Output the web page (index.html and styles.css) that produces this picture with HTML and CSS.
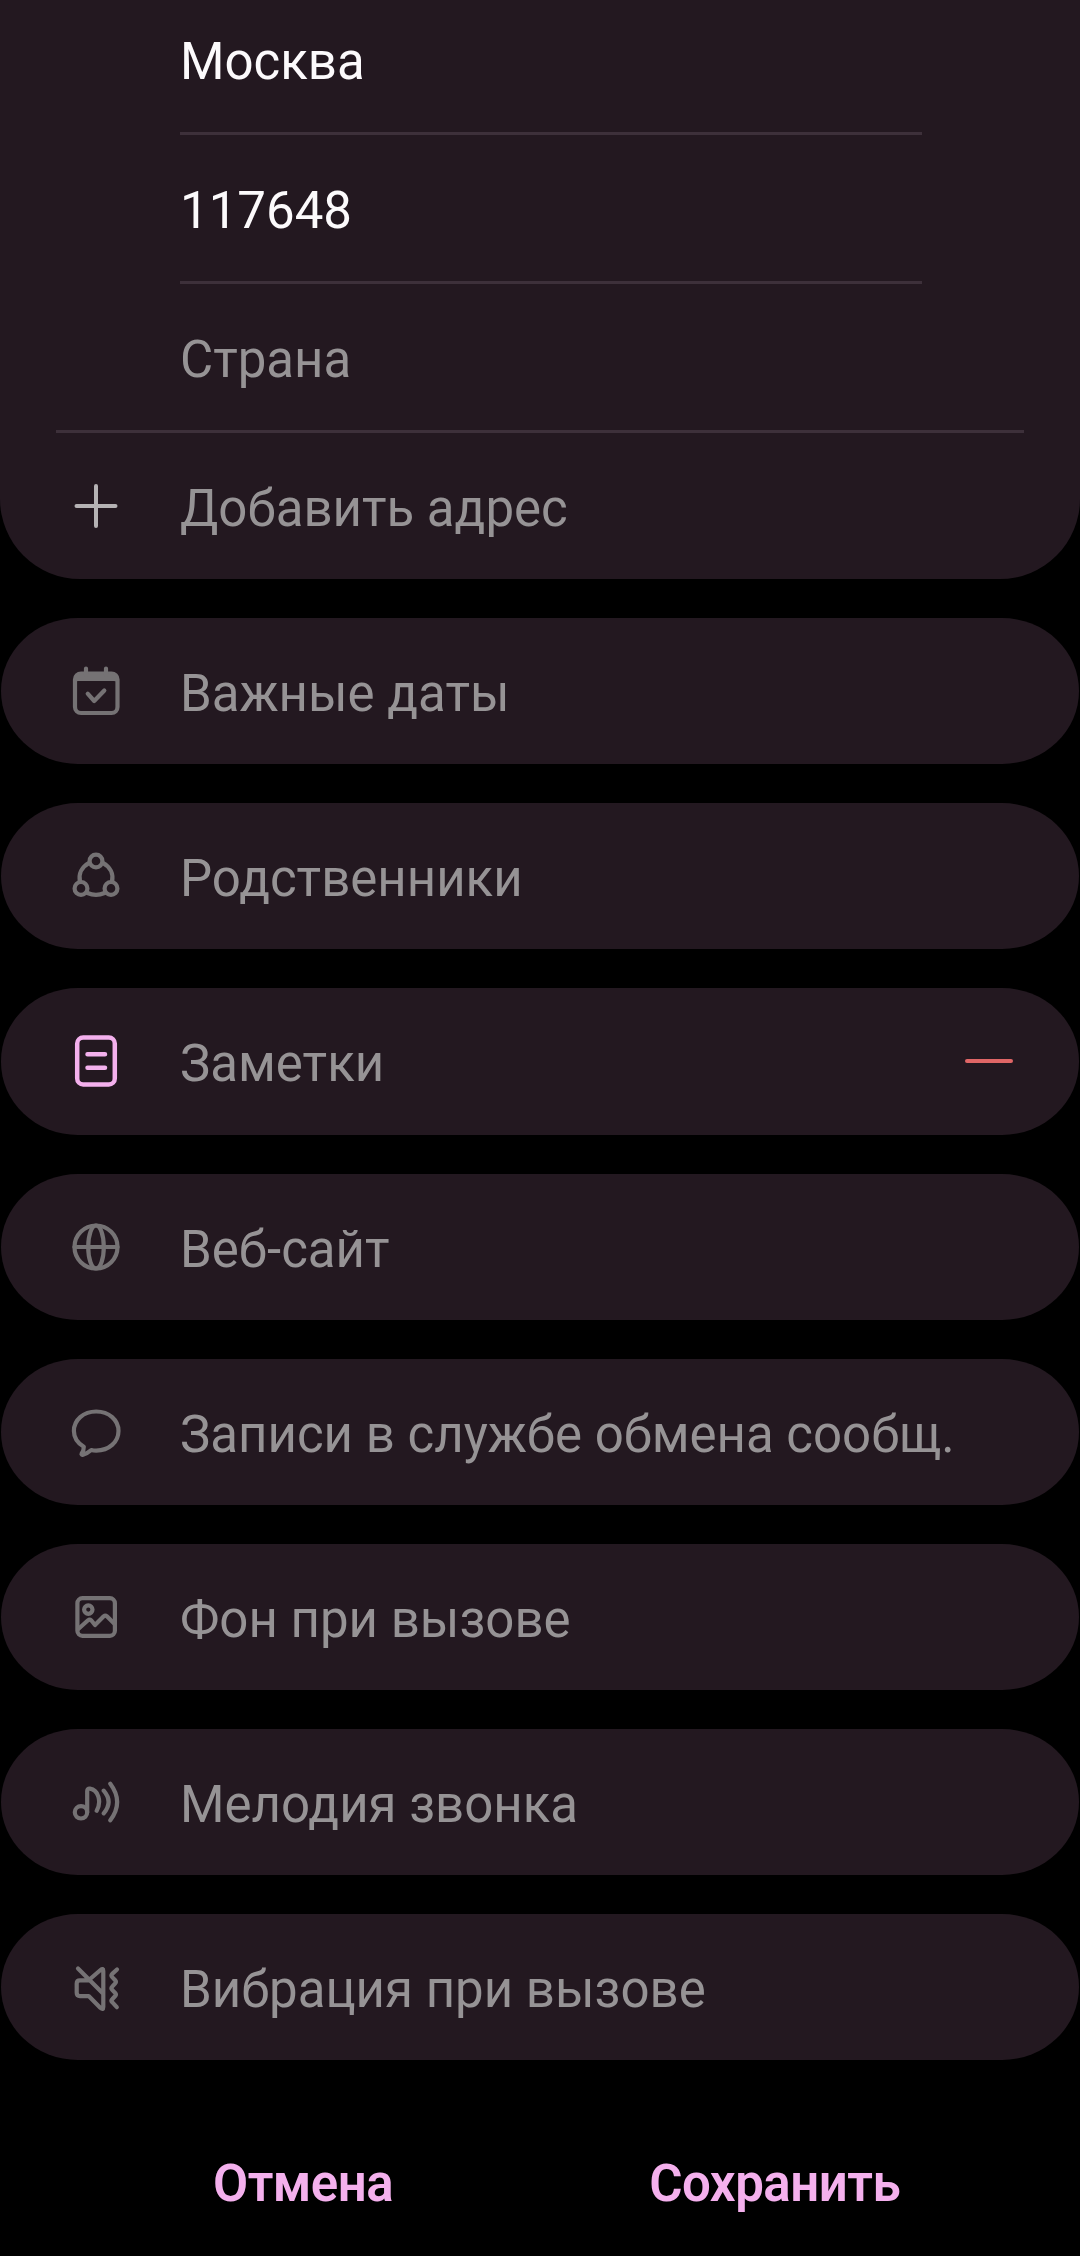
FILE: index.html
```html
<!DOCTYPE html>
<html lang="ru">
<head>
    <meta charset="UTF-8">
    <meta name="viewport" content="width=device-width, initial-scale=1.0">
    <title>Контакт</title>
    <link rel="stylesheet" href="styles.css">
</head>
<body>
    <main class="form">
        <section class="address">
            <div class="field filled">Москва</div>
            <div class="field filled">117648</div>
            <div class="field">Страна</div>
            <div class="row add">
                <svg class="icon" viewBox="0 0 60 60"><path d="M10.5 30h39M30 10v40"/></svg>
                <span class="label">Добавить адрес</span>
            </div>
        </section>

        <div class="row card">
            <svg class="icon" viewBox="0 0 60 60">
                <rect x="9" y="12.5" width="42.5" height="39.5" rx="6"/>
                <path class="solid" d="M8 22v-4q0-6 6-6h32q6 0 6 6v4q-1-2-4-2H12q-3 0-4 2z"/>
                <path d="M20 7.5v6M40 7.5v6M21.7 32.7l6.5 7.3 10.1-10.5"/>
            </svg>
            <span class="label">Важные даты</span>
        </div>

        <div class="row card">
            <svg class="icon" viewBox="0 0 60 60">
                <circle cx="30" cy="15" r="6.4"/>
                <circle cx="15" cy="42.4" r="6.4"/>
                <circle cx="45" cy="42.4" r="6.4"/>
                <path d="M23.2 16.8C15.5 21 12.3 28 14 35.5M36.8 16.8C44.5 21 47.7 28 46 35.5M21.5 47q8.5 3.8 17 0"/>
            </svg>
            <span class="label">Родственники</span>
        </div>

        <div class="row card notes">
            <svg class="icon accent" viewBox="0 0 60 60">
                <rect x="11.2" y="6.6" width="37.6" height="46.8" rx="6"/>
                <path d="M21.5 23.3h17.5M21.5 36.7h17.5"/>
            </svg>
            <span class="label">Заметки</span>
            <span class="minus"></span>
        </div>

        <div class="row card">
            <svg class="icon" viewBox="0 0 60 60">
                <circle cx="30" cy="30" r="21.5"/>
                <ellipse cx="30" cy="30" rx="7.8" ry="21.5"/>
                <path d="M8.5 30h43"/>
            </svg>
            <span class="label">Веб-сайт</span>
        </div>

        <div class="row card">
            <svg class="icon" viewBox="0 0 60 60">
                <path d="M25.3 48C27 48.5 28.5 48.6 30.2 48.6C43 48.6 52.5 40 52.5 29S43 9.5 30.2 9.5S7.9 18 7.9 29C7.9 35.3 11.5 41 17.8 44.8C17.9 47.5 17 49.5 15.6 51.6C15.2 52.5 16 53 17 52.7C20 51.8 22.7 50.3 25.3 48z"/>
            </svg>
            <span class="label">Записи в службе обмена сообщ.</span>
        </div>

        <div class="row card">
            <svg class="icon" viewBox="0 0 60 60">
                <rect x="11.4" y="11.2" width="37.5" height="37.6" rx="5"/>
                <circle cx="22.3" cy="22.6" r="4.2"/>
                <path d="M12.3 42l9.7-8.7q1.7-1.3 3.2 0l3.8 4.7 8.7-8.7q1.6-1.4 3.2 0l8 8"/>
            </svg>
            <span class="label">Фон при вызове</span>
        </div>

        <div class="row card">
            <svg class="icon" viewBox="0 0 60 60">
                <circle cx="15" cy="40.3" r="6.2"/>
                <path d="M21.2 40.3V19q0-2.7 2.8-2.3C32 18 36 29 30.7 38.7M37.7 18.7Q47.5 30 37.7 41.3M44.3 11.7Q58 30 44.3 48.3"/>
            </svg>
            <span class="label">Мелодия звонка</span>
        </div>

        <div class="row card">
            <svg class="icon" viewBox="0 0 60 60">
                <path d="M22.5 23.3H14q-3.3 0-3.3 3.3v9.2q0 3.3 3.3 3.3h8.7L34.5 51q2.8 2.4 2.8-1V14q0-3.4-2.8-1L23.5 22.5M12 11.5l25 25"/>
                <path d="M51 12.5l-4.8 4.4q-1.5 1.6 0 3.2l3 3.2q1.4 1.5 0 3l-3 3.4q-1.5 1.6 0 3.2l3 3.1q1.4 1.5 0 3l-3 3.2q-1.5 1.5 0 3l4.6 5"/>
            </svg>
            <span class="label">Вибрация при вызове</span>
        </div>
    </main>

    <footer class="actions">
        <button class="btn">Отмена</button>
        <button class="btn">Сохранить</button>
    </footer>
</body>
</html>
```
FILE: styles.css
```css
* {
    box-sizing: border-box;
}

body {
    margin: 0;
    height: 2256px;
    overflow: hidden;
    background-color: #000;
    color: #969395;
    font-family: Roboto, "Noto Sans", sans-serif;
    font-size: 51px;
    line-height: 60px;
}

.form {
    display: flex;
    flex-direction: column;
    gap: 39px;
}

/* Address block, scrolled partly off the top */
.address {
    height: 593px;
    margin-top: -14px;
    background-color: #231820;
    border-radius: 0 0 80px 80px;
}

.field {
    height: 149px;
    margin: 0 158px 0 180px;
    padding-top: 46px;
    border-bottom: 3px solid #3d303a;
}

.field:nth-child(3) {
    margin: 0 56px;
    padding-left: 124px;
}

.filled {
    color: #fcfafc;
}

.row {
    display: flex;
    align-items: center;
    height: 146px;
    padding: 0 66px;
}

.card {
    margin: 0 1px;
    padding: 0 65px;
    background-color: #231820;
    border-radius: 77px / 73px;
}

.notes {
    height: 147px;
    padding-right: 66px;
    padding-bottom: 1px;
}

.icon {
    width: 60px;
    height: 60px;
    margin-right: 54px;
    fill: none;
    stroke: #757274;
    stroke-width: 4.2;
    stroke-linecap: round;
    stroke-linejoin: round;
}

.icon .solid {
    fill: #757274;
    stroke: none;
}

.icon.accent {
    stroke: #f4b0ed;
    stroke-width: 4.5;
}

.add .icon {
    stroke: #b5b2b4;
    stroke-width: 4;
}

.label {
    padding-top: 6px;
    white-space: nowrap;
}

.minus {
    width: 48px;
    height: 4px;
    margin-left: auto;
    border-radius: 2px;
    background-color: #e06666;
}

.actions {
    display: flex;
    padding: 94px 0 0 213px;
    gap: 256px;
}

.btn {
    padding: 0;
    border: none;
    background: none;
    color: #f4b0ed;
    font: 600 51px/60px Roboto, "Noto Sans", sans-serif;
    letter-spacing: -0.5px;
    cursor: pointer;
}
```
